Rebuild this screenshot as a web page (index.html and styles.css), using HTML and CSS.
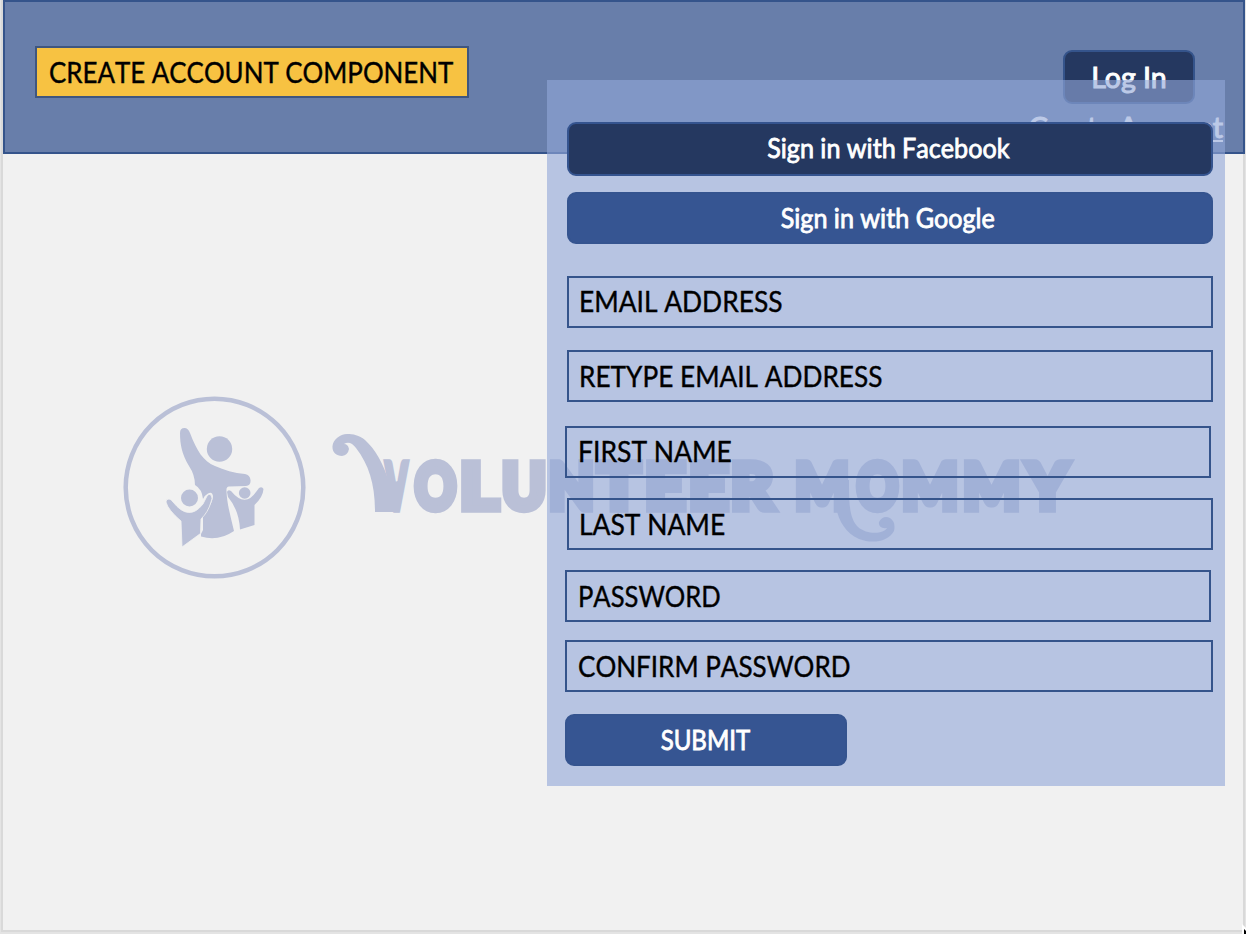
FILE: index.html
```html
<!DOCTYPE html>
<html lang="en">
<head>
<meta charset="utf-8">
<title>Volunteer Mommy – Create Account</title>
<link rel="stylesheet" href="styles.css">
</head>
<body>
<div class="slide">
  <header class="header">
    <h1 class="tag"><span class="t-tag">CREATE ACCOUNT COMPONENT</span></h1>
    <nav class="account">
      <a class="login"><span class="t-login">Log In</span></a>
      <a class="create"><span class="t-create">Create Account</span></a>
    </nav>
  </header>
  <svg class="brand" viewBox="110 385 980 205" width="980" height="205" fill="#bac0d7">
    <circle cx="214.500" cy="487.500" r="88.800" fill="none" stroke="#bac0d7" stroke-width="4.500"/>
    <circle cx="219.500" cy="449" r="12.700"/>
    <path d="M180 433Q180 428 184.500 428Q188 428 190 433C197 451 203 461 215 466C224 470 234 473 245 474Q250 475 250.500 480Q251 485 246 486L229 486.500Q226 487 226.500 491C227 505 231 518 234 531Q218 542 201 536.500L201 534L203 530L203 516C208 509 213 502 213 496Q212 491 208 493.500Q205 495 203 499Q202 489 195 485Q195 475 189 466C182 454 180 445 180 433Z"/>
    <circle cx="189.500" cy="498" r="8.500"/>
    <path d="M166 502Q166 499 169 499Q171 499 173 502Q189 522 203 504L207 496Q209 493 211 495Q213 498 211 502C209 509 206 514 201 519L200.500 533.500L182 547L181 521Q168 510 166 502Z" stroke="#f1f1f1" stroke-width=".8"/>
    <circle cx="244.700" cy="493" r="5.800"/>
    <path d="M227 492Q228 489 231 491Q245 508 256 492L259 488Q262 486 263.500 489Q263 497 254.500 505L254.500 525L240 529.500Q239 510 228 497Z"/>
    <path d="M347 434C340 434 333 440 332.500 446C332 452 336 456 342 456Q348 455 349 449Q348 444 344 444Q350 440 356 448C369 465 375 484 375 512H399C399 498 401 490 403 480L389 483C384 464 375 449 365 440C359 435 353 434 347 434Z"/>
    <path d="M849 480V486C849 506 850 519 858 527C867 535 884 534 887 528Q878 529 879 522Q883 515 890 518Q896 522 894 531C888 542 872 544 859 539C841 531 835 512 835 495V480Z"/>
    <g class="wordmark">
      <text x="386" y="509" textLength="21" lengthAdjust="spacingAndGlyphs">V</text>
      <text x="415" y="509" textLength="41" lengthAdjust="spacingAndGlyphs">O</text>
      <text x="460" y="509" textLength="38" lengthAdjust="spacingAndGlyphs">L</text>
      <text x="502" y="509" textLength="44" lengthAdjust="spacingAndGlyphs">U</text>
      <text x="549" y="509" textLength="45" lengthAdjust="spacingAndGlyphs">N</text>
      <text x="598" y="509" textLength="42" lengthAdjust="spacingAndGlyphs">T</text>
      <text x="645" y="509" textLength="40" lengthAdjust="spacingAndGlyphs">E</text>
      <text x="689" y="509" textLength="39" lengthAdjust="spacingAndGlyphs">E</text>
      <text x="731" y="509" textLength="42" lengthAdjust="spacingAndGlyphs">R</text>
      <text x="795" y="509" textLength="54" lengthAdjust="spacingAndGlyphs">M</text>
      <text x="857" y="509" textLength="41" lengthAdjust="spacingAndGlyphs">O</text>
      <text x="902" y="509" textLength="56" lengthAdjust="spacingAndGlyphs">M</text>
      <text x="963" y="509" textLength="57" lengthAdjust="spacingAndGlyphs">M</text>
      <text x="1027" y="509" textLength="41" lengthAdjust="spacingAndGlyphs">Y</text>
    </g>
  </svg>
  <form class="panel">
    <div class="btn facebook"><span class="t-fb">Sign in with Facebook</span></div>
    <div class="btn google"><span class="t-go">Sign in with Google</span></div>
    <div class="field email"><span class="t-email">EMAIL ADDRESS</span></div>
    <div class="field retype"><span class="t-retype">RETYPE EMAIL ADDRESS</span></div>
    <div class="field first shift"><span class="t-first">FIRST NAME</span></div>
    <div class="field last"><span class="t-last">LAST NAME</span></div>
    <div class="field pass shift"><span class="t-pass">PASSWORD</span></div>
    <div class="field confirm"><span class="t-confirm">CONFIRM PASSWORD</span></div>
    <div class="btn submit"><span class="t-submit">SUBMIT</span></div>
  </form>
  <svg class="cursor" width="4" height="10" viewBox="0 0 4 10"><path d="M0 0L4 4V10H0Z" fill="#fff"/><path d="M2 5L4 7V10H2Z" fill="#000"/></svg>
</div>
</body>
</html>
```
FILE: styles.css
```css
* { box-sizing: border-box; }
body {
  margin: 0;
  background: #e5e5e5;
  font-family: Lato, "Liberation Sans", sans-serif;
}
.slide {
  position: relative;
  width: 1246px;
  height: 934px;
  overflow: hidden;
  padding: 0 1px 2px 1px;
  background: linear-gradient(#f1f1f1, #f1f1f1) 3px 0 / 1240px 930px no-repeat,
              linear-gradient(#d9d9d9, #d9d9d9) 1px 0 / 1244px 932px no-repeat, #e4e4e4;
}
.header {
  display: flex;
  justify-content: space-between;
  align-items: flex-start;
  width: 1242px;
  height: 154px;
  margin-left: 2px;
  padding: 44px 20px 0 30px;
  background: #687eaa;
  border: 2px solid #35548b;
}
.tag {
  display: flex;
  align-items: center;
  width: 434px;
  height: 52px;
  margin: 0;
  padding-left: 12px;
  background: #f7c242;
  border: 2px solid #3f567f;
  font-size: 28.5px;
  font-weight: 400;
  white-space: nowrap;
}
.tag span,
.field span {
  display: inline-block;
  font-kerning: none;
  transform: scaleX(0.92);
  transform-origin: left center;
  -webkit-text-stroke: 0.4px #000;
}
.tag .t-tag { transform: scaleX(0.908); }
.field .t-email { transform: scaleX(0.925); }
.field .t-first { transform: scaleX(0.93); }
.field .t-last { transform: scaleX(0.928); }
.field .t-pass { transform: scaleX(0.897); }
.field .t-confirm { transform: scaleX(0.913); }
.account {
  display: flex;
  flex-direction: column;
  align-items: flex-end;
  padding-top: 4px;
  color: #fff;
  font-weight: 400;
  white-space: nowrap;
  -webkit-text-stroke: 1px #fff;
}
.login {
  display: flex;
  align-items: center;
  justify-content: center;
  width: 132px;
  height: 54px;
  margin-right: 28px;
  background: #253860;
  border: 2px solid #35548b;
  border-radius: 9px;
  font-size: 28.5px;
}
.create {
  margin-top: 7px;
  line-height: 32px;
  font-size: 28.7px;
  text-decoration: underline;
}
.brand {
  position: absolute;
  left: 110px;
  top: 385px;
}
.wordmark {
  font-family: Lato, sans-serif;
  font-weight: 900;
  font-size: 62px;
  stroke: #bac0d7;
  stroke-width: 7.5px;
}
.panel {
  position: absolute;
  left: 547px;
  top: 80px;
  width: 678px;
  height: 706px;
  padding: 42px 12px 20px 20px;
  background: rgba(146, 167, 216, 0.613);
  white-space: nowrap;
}
.btn {
  display: flex;
  align-items: center;
  justify-content: center;
  height: 52px;
  padding: 0 4px 1px 0;
  border: 2px solid #35548f;
  border-radius: 9px;
  background: #365592;
  color: #fff;
  font-size: 26px;
  font-weight: 400;
  -webkit-text-stroke: 0.8px #fff;
}
.btn span {
  display: inline-block;
  font-kerning: none;
  transform: scaleX(0.967);
}
.btn .t-submit { transform: scaleX(0.925); }
.facebook { height: 54px; padding-bottom: 2px; background: #253860; }
.google { margin-top: 16px; }
.field {
  display: flex;
  align-items: center;
  height: 52px;
  padding-left: 9.5px;
  border: 2px solid #35548b;
  color: #000;
  font-size: 28.5px;
}
.email { margin-top: 32px; padding-bottom: 2px; }
.retype { margin-top: 22px; }
.first { margin-top: 24px; padding-bottom: 2px; }
.last { margin-top: 20px; }
.pass { margin-top: 20px; }
.confirm { margin-top: 18px; margin-left: -2px; padding-left: 11px; }
.shift { margin-left: -2px; margin-right: 2px; padding-left: 11px; }
.submit { width: 282px; margin: 22px 0 0 -2px; padding-right: 2px; }
.cursor {
  position: absolute;
  right: 0;
  bottom: 0;
}
```
